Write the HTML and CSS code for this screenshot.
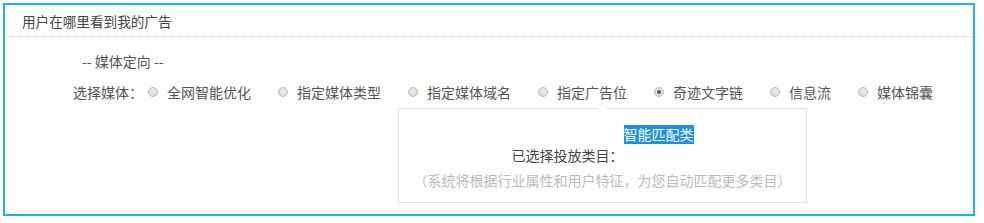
FILE: index.html
```html
<!DOCTYPE html>
<html lang="zh-CN">
<head>
  <meta charset="UTF-8">
  <title>媒体定向</title>
  <link rel="stylesheet" href="styles.css">
</head>
<body>
  <div class="panel">
    <div class="panel-header">用户在哪里看到我的广告</div>
    <div class="panel-body">
      <div class="section-title">-- 媒体定向 --</div>
      <div class="media-row">
        <span class="media-label">选择媒体：</span>
        <label class="radio"><span class="dot"></span>全网智能优化</label>
        <label class="radio"><span class="dot"></span>指定媒体类型</label>
        <label class="radio"><span class="dot"></span>指定媒体域名</label>
        <label class="radio"><span class="dot"></span>指定广告位</label>
        <label class="radio checked"><span class="dot"></span>奇迹文字链</label>
        <label class="radio"><span class="dot"></span>信息流</label>
        <label class="radio"><span class="dot"></span>媒体锦囊</label>
      </div>
      <div class="pop">
        <div class="picked">
          <span class="picked-label">已选择投放类目：</span>
          <span class="chip">智能匹配类</span>
        </div>
        <div class="hint">（系统将根据行业属性和用户特征，为您自动匹配更多类目）</div>
      </div>
    </div>
  </div>
</body>
</html>
```

FILE: styles.css
```css
* {
  box-sizing: border-box;
  margin: 0;
  padding: 0;
}

body {
  font-family: "Noto Sans CJK SC", "Liberation Sans", sans-serif;
  font-size: 14px;
  color: #555;
  background: #fff;
  padding: 3px 9px 0 3px;
  text-spacing-trim: space-all;
}

.panel {
  border: 2px solid #1db2f0;
  height: 213px;
}

.panel-header {
  height: 32px;
  line-height: 32px;
  padding-left: 17px;
  font-size: 13.6px;
  color: #444;
  border-bottom: 1px dotted #d6d6d6;
}

.panel-body {
  padding-top: 14px;
}

.section-title {
  line-height: 20px;
  padding-left: 77px;
}

.media-row {
  display: flex;
  align-items: center;
  line-height: 20px;
  margin-top: 11px;
  padding-left: 68px;
}

.media-label {
  margin-right: 5px;
}

.radio {
  display: flex;
  align-items: center;
  margin-right: 27px;
}

.radio .dot {
  width: 10px;
  height: 10px;
  border-radius: 50%;
  border: 1px solid #bdbdbd;
  background: radial-gradient(circle at 50% 40%, #ececec, #d2d2d2);
  margin-right: 9px;
  position: relative;
}

.radio.checked .dot::after {
  content: "";
  position: absolute;
  left: 2px;
  top: 2px;
  width: 4px;
  height: 4px;
  border-radius: 50%;
  background: #5a5a5a;
}

.pop {
  position: relative;
  margin: 6px 0 0 393px;
  width: 409px;
  height: 95px;
  border: 1px solid #e2e2e2;
  padding-top: 16px;
  text-align: center;
}

.pop::before,
.pop::after {
  content: "";
  position: absolute;
  left: 198px;
  border: 6px solid transparent;
  border-top: 0;
}

.pop::before {
  top: -7px;
  border-bottom: 7px solid #e2e2e2;
}

.pop::after {
  top: -6px;
  border-bottom: 7px solid #fff;
}

.picked {
  display: flex;
  justify-content: center;
  align-items: flex-end;
}

.picked-label {
  line-height: 20px;
  color: #444;
}

.chip {
  line-height: 19px;
  margin-bottom: 21px;
  background: #1d90e6;
  color: #fff;
}

.hint {
  margin-top: 5px;
  line-height: 20px;
  color: #bbb;
}
```
